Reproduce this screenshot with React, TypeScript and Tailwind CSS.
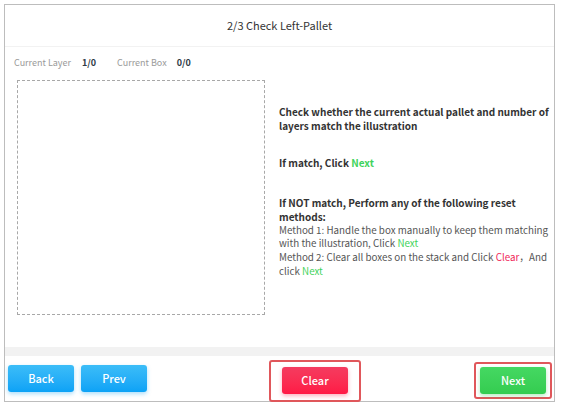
import React from 'react';

const font = { fontFamily: '"Noto Sans CJK SC", "Noto Sans", sans-serif' };

const Btn = ({ label, className }: { label: string; className: string }) => {
    return (
        <button
            className={`h-[27px] w-[66px] rounded-[3px] text-[11px] font-medium text-white ${className}`}
        >
            {label}
        </button>
    )
}

export default function App() {
    return (
        <div className="w-[562px] h-[405px] bg-white pl-[4px] pt-[4px]" style={font}>
            <div className="flex flex-col w-[551px] h-[398px] border border-[#bdbdbd]">
                <div className="flex items-center justify-center h-[42px] shrink-0 border-b border-[#f2f2f2] text-[11px] text-[#333]">
                    2/3 Check Left-Pallet
                </div>

                <div className="flex flex-row items-center h-[27px] pl-[9px] pt-[5px] text-[9px] text-[#9a9a9a]">
                    <span>Current Layer</span>
                    <span className="ml-[11px] font-bold text-[#2f3b46]">1/0</span>
                    <span className="ml-[21px]">Current Box</span>
                    <span className="ml-[10px] font-bold text-[#2f3b46]">0/0</span>
                </div>

                <div className="flex flex-row flex-1 pt-[6px] pl-[12px]">
                    <div className="w-[248px] h-[235px] shrink-0 border border-dashed border-[#a8a8a8]" />
                    <div className="flex flex-col pl-[14px] pt-[25px] text-[10px] leading-[13.7px] text-[#555]">
                        <p className="font-bold text-[#333]">
                            Check whether the current actual pallet and number of layers match the illustration
                        </p>
                        <p className="mt-[24px] font-bold text-[#333]">
                            If match, Click <span className="text-[#3fd35c]">Next</span>
                        </p>
                        <p className="mt-[26px] font-bold text-[#333]">
                            If NOT match, Perform any of the following reset methods:
                        </p>
                        <p className="text-[9.8px] leading-[13.7px]">
                            Method 1: Handle the box manually to keep them matching with the illustration, Click <span className="text-[#3fd35c]">Next</span>
                        </p>
                        <p className="text-[9.8px] leading-[13.7px]">
                            Method 2: Clear all boxes on the stack and Click <span className="text-[#f0285a]">Clear</span>，And click <span className="text-[#3fd35c]">Next</span>
                        </p>
                    </div>
                </div>

                <div className="h-[9px] shrink-0 bg-[#f2f2f2]" />

                <div className="flex flex-row items-center h-[45px] shrink-0 px-[3px]">
                    <div className="flex flex-row gap-[7px]">
                        <Btn label="Back" className="bg-gradient-to-b from-[#3bbdf8] to-[#0aa2f6] shadow-[0_2px_4px_rgba(20,160,240,0.35)]" />
                        <Btn label="Prev" className="bg-gradient-to-b from-[#3bbdf8] to-[#0aa2f6] shadow-[0_2px_4px_rgba(20,160,240,0.35)]" />
                    </div>
                    <div className="flex items-center justify-center ml-[122px] w-[92px] h-[42px] mt-[4px] border-2 border-[#e0575b] rounded-[3px]">
                        <Btn label="Clear" className="bg-gradient-to-b from-[#f43b5f] to-[#ff1845] shadow-[0_2px_4px_rgba(245,30,70,0.35)]" />
                    </div>
                    <div className="flex items-center justify-center ml-auto mr-[-1px] w-[78px] h-[37px] mt-[4px] border-2 border-[#e0575b] rounded-[3px]">
                        <Btn label="Next" className="bg-gradient-to-b from-[#45d862] to-[#34cc50] shadow-[0_2px_4px_rgba(50,200,80,0.35)]" />
                    </div>
                </div>
            </div>
        </div>
    )
}
